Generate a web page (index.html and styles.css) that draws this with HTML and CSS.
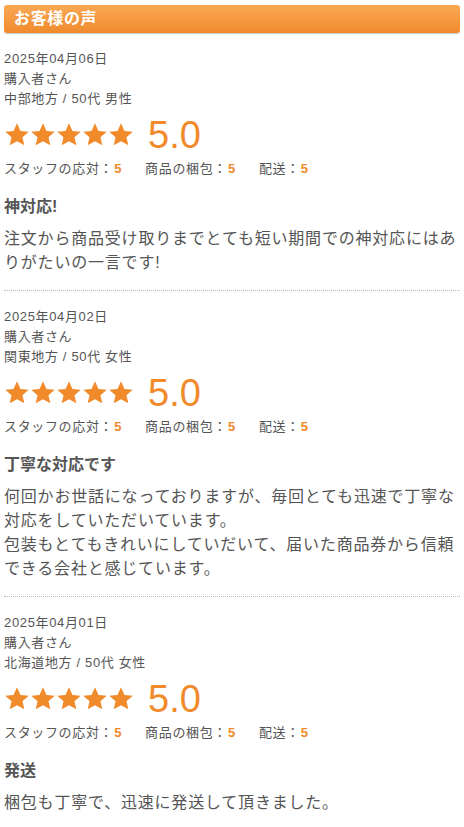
FILE: index.html
```html
<!DOCTYPE html>
<html lang="ja">
<head>
<meta charset="utf-8">
<title>お客様の声</title>
<link rel="stylesheet" href="styles.css">
</head>
<body>
<div class="wrap">
  <h2 class="heading">お客様の声</h2>

  <div class="review">
    <div class="meta">
      <div>2025年04月06日</div>
      <div>購入者さん</div>
      <div>中部地方 / 50代 男性</div>
    </div>
    <div class="rating">
      <div class="stars">
        <svg viewBox="0 0 24 24"><path d="M12 1.2l3.2 7 7.6.75-5.75 5.1 1.7 7.5L12 17.7l-6.75 3.85 1.7-7.5L1.2 8.95l7.6-.75z"/></svg>
        <svg viewBox="0 0 24 24"><path d="M12 1.2l3.2 7 7.6.75-5.75 5.1 1.7 7.5L12 17.7l-6.75 3.85 1.7-7.5L1.2 8.95l7.6-.75z"/></svg>
        <svg viewBox="0 0 24 24"><path d="M12 1.2l3.2 7 7.6.75-5.75 5.1 1.7 7.5L12 17.7l-6.75 3.85 1.7-7.5L1.2 8.95l7.6-.75z"/></svg>
        <svg viewBox="0 0 24 24"><path d="M12 1.2l3.2 7 7.6.75-5.75 5.1 1.7 7.5L12 17.7l-6.75 3.85 1.7-7.5L1.2 8.95l7.6-.75z"/></svg>
        <svg viewBox="0 0 24 24"><path d="M12 1.2l3.2 7 7.6.75-5.75 5.1 1.7 7.5L12 17.7l-6.75 3.85 1.7-7.5L1.2 8.95l7.6-.75z"/></svg>
      </div>
      <span class="score">5.0</span>
    </div>
    <div class="details">
      <span class="item">スタッフの応対：<b>5</b></span>
      <span class="item">商品の梱包：<b>5</b></span>
      <span class="item">配送：<b>5</b></span>
    </div>
    <h3 class="title">神対応!</h3>
    <p class="body">注文から商品受け取りまでとても短い期間での神対応にはありがたいの一言です!</p>
  </div>

  <div class="review">
    <div class="meta">
      <div>2025年04月02日</div>
      <div>購入者さん</div>
      <div>関東地方 / 50代 女性</div>
    </div>
    <div class="rating">
      <div class="stars">
        <svg viewBox="0 0 24 24"><path d="M12 1.2l3.2 7 7.6.75-5.75 5.1 1.7 7.5L12 17.7l-6.75 3.85 1.7-7.5L1.2 8.95l7.6-.75z"/></svg>
        <svg viewBox="0 0 24 24"><path d="M12 1.2l3.2 7 7.6.75-5.75 5.1 1.7 7.5L12 17.7l-6.75 3.85 1.7-7.5L1.2 8.95l7.6-.75z"/></svg>
        <svg viewBox="0 0 24 24"><path d="M12 1.2l3.2 7 7.6.75-5.75 5.1 1.7 7.5L12 17.7l-6.75 3.85 1.7-7.5L1.2 8.95l7.6-.75z"/></svg>
        <svg viewBox="0 0 24 24"><path d="M12 1.2l3.2 7 7.6.75-5.75 5.1 1.7 7.5L12 17.7l-6.75 3.85 1.7-7.5L1.2 8.95l7.6-.75z"/></svg>
        <svg viewBox="0 0 24 24"><path d="M12 1.2l3.2 7 7.6.75-5.75 5.1 1.7 7.5L12 17.7l-6.75 3.85 1.7-7.5L1.2 8.95l7.6-.75z"/></svg>
      </div>
      <span class="score">5.0</span>
    </div>
    <div class="details">
      <span class="item">スタッフの応対：<b>5</b></span>
      <span class="item">商品の梱包：<b>5</b></span>
      <span class="item">配送：<b>5</b></span>
    </div>
    <h3 class="title">丁寧な対応です</h3>
    <p class="body">何回かお世話になっておりますが、毎回とても迅速で丁寧な対応をしていただいています。<br>包装もとてもきれいにしていだいて、届いた商品券から信頼できる会社と感じています。</p>
  </div>

  <div class="review">
    <div class="meta">
      <div>2025年04月01日</div>
      <div>購入者さん</div>
      <div>北海道地方 / 50代 女性</div>
    </div>
    <div class="rating">
      <div class="stars">
        <svg viewBox="0 0 24 24"><path d="M12 1.2l3.2 7 7.6.75-5.75 5.1 1.7 7.5L12 17.7l-6.75 3.85 1.7-7.5L1.2 8.95l7.6-.75z"/></svg>
        <svg viewBox="0 0 24 24"><path d="M12 1.2l3.2 7 7.6.75-5.75 5.1 1.7 7.5L12 17.7l-6.75 3.85 1.7-7.5L1.2 8.95l7.6-.75z"/></svg>
        <svg viewBox="0 0 24 24"><path d="M12 1.2l3.2 7 7.6.75-5.75 5.1 1.7 7.5L12 17.7l-6.75 3.85 1.7-7.5L1.2 8.95l7.6-.75z"/></svg>
        <svg viewBox="0 0 24 24"><path d="M12 1.2l3.2 7 7.6.75-5.75 5.1 1.7 7.5L12 17.7l-6.75 3.85 1.7-7.5L1.2 8.95l7.6-.75z"/></svg>
        <svg viewBox="0 0 24 24"><path d="M12 1.2l3.2 7 7.6.75-5.75 5.1 1.7 7.5L12 17.7l-6.75 3.85 1.7-7.5L1.2 8.95l7.6-.75z"/></svg>
      </div>
      <span class="score">5.0</span>
    </div>
    <div class="details">
      <span class="item">スタッフの応対：<b>5</b></span>
      <span class="item">商品の梱包：<b>5</b></span>
      <span class="item">配送：<b>5</b></span>
    </div>
    <h3 class="title">発送</h3>
    <p class="body">梱包も丁寧で、迅速に発送して頂きました。</p>
  </div>
</div>
</body>
</html>
```

FILE: styles.css
```css
html, body {
  margin: 0;
  padding: 0;
  background: #fff;
}
body {
  font-family: "Liberation Sans", "Noto Sans CJK JP", sans-serif;
  color: #555;
}
.wrap {
  padding: 5px 4px 0 4px;
}
.heading {
  margin: 0;
  height: 28px;
  line-height: 28px;
  padding-left: 10px;
  font-size: 16px;
  font-weight: bold;
  letter-spacing: 0.04em;
  color: #fff;
  background: linear-gradient(#faa854, #f08a2c);
  border-radius: 3px;
  box-shadow: 0 1px 1px #c8c8c8;
}
.review {
  padding: 16px 0 15px;
  border-bottom: 1px dotted #bbb;
}
.review:last-child {
  border-bottom: none;
}
.meta {
  font-size: 13px;
  line-height: 20px;
  letter-spacing: 0.05em;
}
.rating {
  display: flex;
  align-items: center;
  gap: 14px;
  margin-top: 6px;
  height: 40px;
}
.stars {
  display: flex;
}
.stars svg {
  width: 26px;
  height: 26px;
  fill: #f08a2a;
  display: block;
}
.score {
  font-size: 38px;
  line-height: 1;
  color: #f08a2a;
  font-family: "Liberation Sans", sans-serif;
}
.details {
  margin-top: 4px;
  font-size: 13px;
  line-height: 20px;
  letter-spacing: 0.05em;
  display: flex;
  gap: 23px;
}
.details b {
  color: #f08a2a;
  font-weight: bold;
  margin-left: 1px;
}
.title {
  margin: 16px 0 0;
  font-size: 16px;
  line-height: 24px;
  font-weight: bold;
  color: #555;
}
.body {
  margin: 8px 0 0;
  font-size: 16px;
  line-height: 24px;
  letter-spacing: 0.05em;
}
```
